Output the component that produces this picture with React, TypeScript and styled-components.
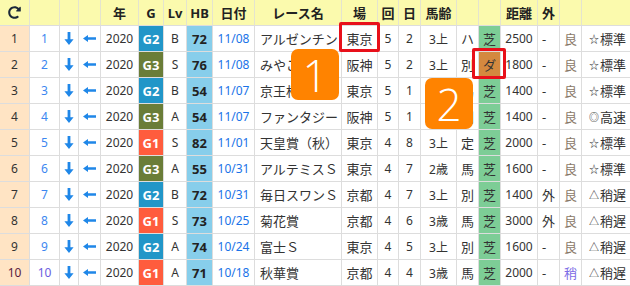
import React from "react";
import styled, { createGlobalStyle } from "styled-components";
import { FaRedoAlt } from "react-icons/fa";

const GlobalStyle = createGlobalStyle`
  html, body {
    margin: 0;
    padding: 0;
    background: #fff;
    overflow: hidden;
  }
  body {
    font-family: "Noto Sans", "Noto Sans CJK JP", sans-serif;
    color: #333;
  }
`;

const COLS =
  "30px 30px 19px 22px 38px 25px 23px 26px 42px 87px 36px 21px 22px 36px 22px 22px 37px 22px 22px 60px";

const Board = styled.div`
  position: relative;
  width: 642px;
`;

const Row = styled.div<{ $head?: boolean }>`
  display: grid;
  grid-template-columns: ${COLS};
  height: 26px;
  box-sizing: border-box;
  border-bottom: 1px solid #dddddd;
  background: ${(p) => (p.$head ? "#fbfaad" : "#fff")};
`;

const Cell = styled.div<{
  $align?: "left" | "center";
  $color?: string;
  $size?: number;
  $bg?: string;
  $bold?: boolean;
  $pad?: number;
}>`
  display: flex;
  align-items: center;
  justify-content: ${(p) => (p.$align === "left" ? "flex-start" : "center")};
  padding-left: ${(p) => (p.$align === "left" ? `${p.$pad ?? 5}px` : "0")};
  box-sizing: border-box;
  border-right: 1px solid #dddddd;
  overflow: hidden;
  white-space: nowrap;
  font-size: ${(p) => p.$size ?? 13}px;
  font-weight: ${(p) => (p.$bold ? 700 : 400)};
  color: ${(p) => p.$color ?? "#333"};
  background: ${(p) => p.$bg ?? "transparent"};
`;

const HeadCell = styled(Cell)`
  font-weight: 700;
  color: #222;
  border-right-color: #e4e4cf;
`;

const NoCell = styled(Cell)`
  background: #ffe4c4;
`;

const gradeColor: Record<string, string> = {
  G1: "#ff5c3d",
  G2: "#2196c8",
  G3: "#6a7d38",
};

const GradeCell = styled(Cell)<{ $grade: string }>`
  background: ${(p) => gradeColor[p.$grade]};
  color: #fff;
  font-weight: 700;
`;

const HbCell = styled(Cell)`
  background: #87ceeb;
  color: #222;
  font-weight: 700;
`;

const SurfaceCell = styled(Cell)<{ $dirt?: boolean }>`
  background: ${(p) => (p.$dirt ? "#d4893f" : "#7dcd96")};
  color: #333;
`;

const PaceMark = styled.span`
  font-size: 10px;
  margin-right: 1px;
`;

const Marker = styled.div<{ $x: number; $y: number; $w: number; $h: number }>`
  position: absolute;
  left: ${(p) => p.$x}px;
  top: ${(p) => p.$y}px;
  width: ${(p) => p.$w}px;
  height: ${(p) => p.$h}px;
  box-sizing: border-box;
  border: 3px solid #e8101a;
  border-radius: 2px;
`;

const Badge = styled.div<{ $x: number; $y: number }>`
  position: absolute;
  left: ${(p) => p.$x}px;
  top: ${(p) => p.$y}px;
  width: 48px;
  height: 51px;
  border-radius: 7px;
  background: #ff8300;
  color: #fff;
  display: flex;
  align-items: center;
  justify-content: center;
  font-family: "Open Sans", "Lato", "Noto Sans", sans-serif;
  font-weight: 300;
  font-size: 44px;
  line-height: 1;
`;

const ARROW = "#1f87e8";

const DownArrow = () => (
  <svg width="10" height="13" viewBox="0 0 10 13">
    <path d="M3.6 0h2.8v7.2H9.6L5 13 0.4 7.2h3.2z" fill={ARROW} />
  </svg>
);

const LeftArrow = () => (
  <svg width="13" height="7" viewBox="0 0 13 7">
    <path d="M0 3.5L5 0v2.2h8v2.6H5V7z" fill={ARROW} />
  </svg>
);

type Race = {
  g: string;
  lv: string;
  hb: number;
  date: string;
  name: string;
  place: string;
  kai: number;
  day: number;
  age: string;
  cls: string;
  surf: string;
  dist: number;
  out: string;
  cond: string;
  mark: string;
  pace: string;
};

const races: Race[] = [
  { g: "G2", lv: "B", hb: 72, date: "11/08", name: "アルゼンチン", place: "東京", kai: 5, day: 2, age: "3上", cls: "ハ", surf: "芝", dist: 2500, out: "-", cond: "良", mark: "☆", pace: "標準" },
  { g: "G3", lv: "S", hb: 76, date: "11/08", name: "みやこＳ", place: "阪神", kai: 5, day: 2, age: "3上", cls: "別", surf: "ダ", dist: 1800, out: "-", cond: "良", mark: "☆", pace: "標準" },
  { g: "G2", lv: "B", hb: 54, date: "11/07", name: "京王杯２歳Ｓ", place: "東京", kai: 5, day: 1, age: "2歳", cls: "馬", surf: "芝", dist: 1400, out: "-", cond: "良", mark: "☆", pace: "標準" },
  { g: "G3", lv: "A", hb: 54, date: "11/07", name: "ファンタジー", place: "阪神", kai: 5, day: 1, age: "2歳", cls: "別", surf: "芝", dist: 1400, out: "-", cond: "良", mark: "◎", pace: "高速" },
  { g: "G1", lv: "S", hb: 82, date: "11/01", name: "天皇賞（秋）", place: "東京", kai: 4, day: 8, age: "3上", cls: "定", surf: "芝", dist: 2000, out: "-", cond: "良", mark: "☆", pace: "標準" },
  { g: "G3", lv: "A", hb: 55, date: "10/31", name: "アルテミスＳ", place: "東京", kai: 4, day: 7, age: "2歳", cls: "馬", surf: "芝", dist: 1600, out: "-", cond: "良", mark: "☆", pace: "標準" },
  { g: "G2", lv: "B", hb: 72, date: "10/31", name: "毎日スワンＳ", place: "京都", kai: 4, day: 7, age: "3上", cls: "別", surf: "芝", dist: 1400, out: "外", cond: "良", mark: "△", pace: "稍遅" },
  { g: "G1", lv: "S", hb: 73, date: "10/25", name: "菊花賞", place: "京都", kai: 4, day: 6, age: "3歳", cls: "馬", surf: "芝", dist: 3000, out: "外", cond: "良", mark: "△", pace: "稍遅" },
  { g: "G2", lv: "A", hb: 74, date: "10/24", name: "富士Ｓ", place: "東京", kai: 4, day: 5, age: "3上", cls: "別", surf: "芝", dist: 1600, out: "-", cond: "良", mark: "△", pace: "稍遅" },
  { g: "G1", lv: "A", hb: 71, date: "10/18", name: "秋華賞", place: "京都", kai: 4, day: 4, age: "3歳", cls: "馬", surf: "芝", dist: 2000, out: "-", cond: "稍", mark: "△", pace: "稍遅" },
];

const App = () => {
  return (
    <>
      <GlobalStyle />
      <Board>
        <Row $head>
          <HeadCell>
            <FaRedoAlt size={13} color="#1b2838" />
          </HeadCell>
          <HeadCell />
          <HeadCell />
          <HeadCell />
          <HeadCell>年</HeadCell>
          <HeadCell>G</HeadCell>
          <HeadCell>Lv</HeadCell>
          <HeadCell>HB</HeadCell>
          <HeadCell>日付</HeadCell>
          <HeadCell>レース名</HeadCell>
          <HeadCell>場</HeadCell>
          <HeadCell>回</HeadCell>
          <HeadCell>日</HeadCell>
          <HeadCell>馬齢</HeadCell>
          <HeadCell />
          <HeadCell />
          <HeadCell>距離</HeadCell>
          <HeadCell>外</HeadCell>
          <HeadCell />
          <HeadCell />
        </Row>
        {races.map((r, i) => {
          const last = i === races.length - 1;
          return (
            <Row key={i}>
              <NoCell $size={12} $color={last ? "#5a1c40" : "#333"}>
                {i + 1}
              </NoCell>
              <Cell $size={12} $color={last ? "#6b5de0" : "#3d87f0"}>
                {i + 1}
              </Cell>
              <Cell>
                <DownArrow />
              </Cell>
              <Cell>
                <LeftArrow />
              </Cell>
              <Cell $size={12}>2020</Cell>
              <GradeCell $grade={r.g}>{r.g}</GradeCell>
              <Cell $size={12}>{r.lv}</Cell>
              <HbCell>{r.hb}</HbCell>
              <Cell $size={12} $color="#1a73e8">
                {r.date}
              </Cell>
              <Cell $align="left">{r.name}</Cell>
              <Cell>{r.place}</Cell>
              <Cell $size={12}>{r.kai}</Cell>
              <Cell $size={12}>{r.day}</Cell>
              <Cell $size={12}>{r.age}</Cell>
              <Cell>{r.cls}</Cell>
              <SurfaceCell $dirt={r.surf === "ダ"}>{r.surf}</SurfaceCell>
              <Cell $size={12}>{r.dist}</Cell>
              <Cell $align="left" $pad={4}>
                {r.out}
              </Cell>
              <Cell $color={r.cond === "稍" ? "#7d6ce6" : "#8a7868"}>{r.cond}</Cell>
              <Cell $align="left" $pad={7}>
                <PaceMark>{r.mark}</PaceMark>
                {r.pace}
              </Cell>
            </Row>
          );
        })}
        <Marker $x={339} $y={22} $w={41} $h={30} />
        <Marker $x={472} $y={48} $w={34} $h={31} />
        <Badge $x={291} $y={49}>1</Badge>
        <Badge $x={425} $y={78}>2</Badge>
      </Board>
    </>
  );
};

export default App;
